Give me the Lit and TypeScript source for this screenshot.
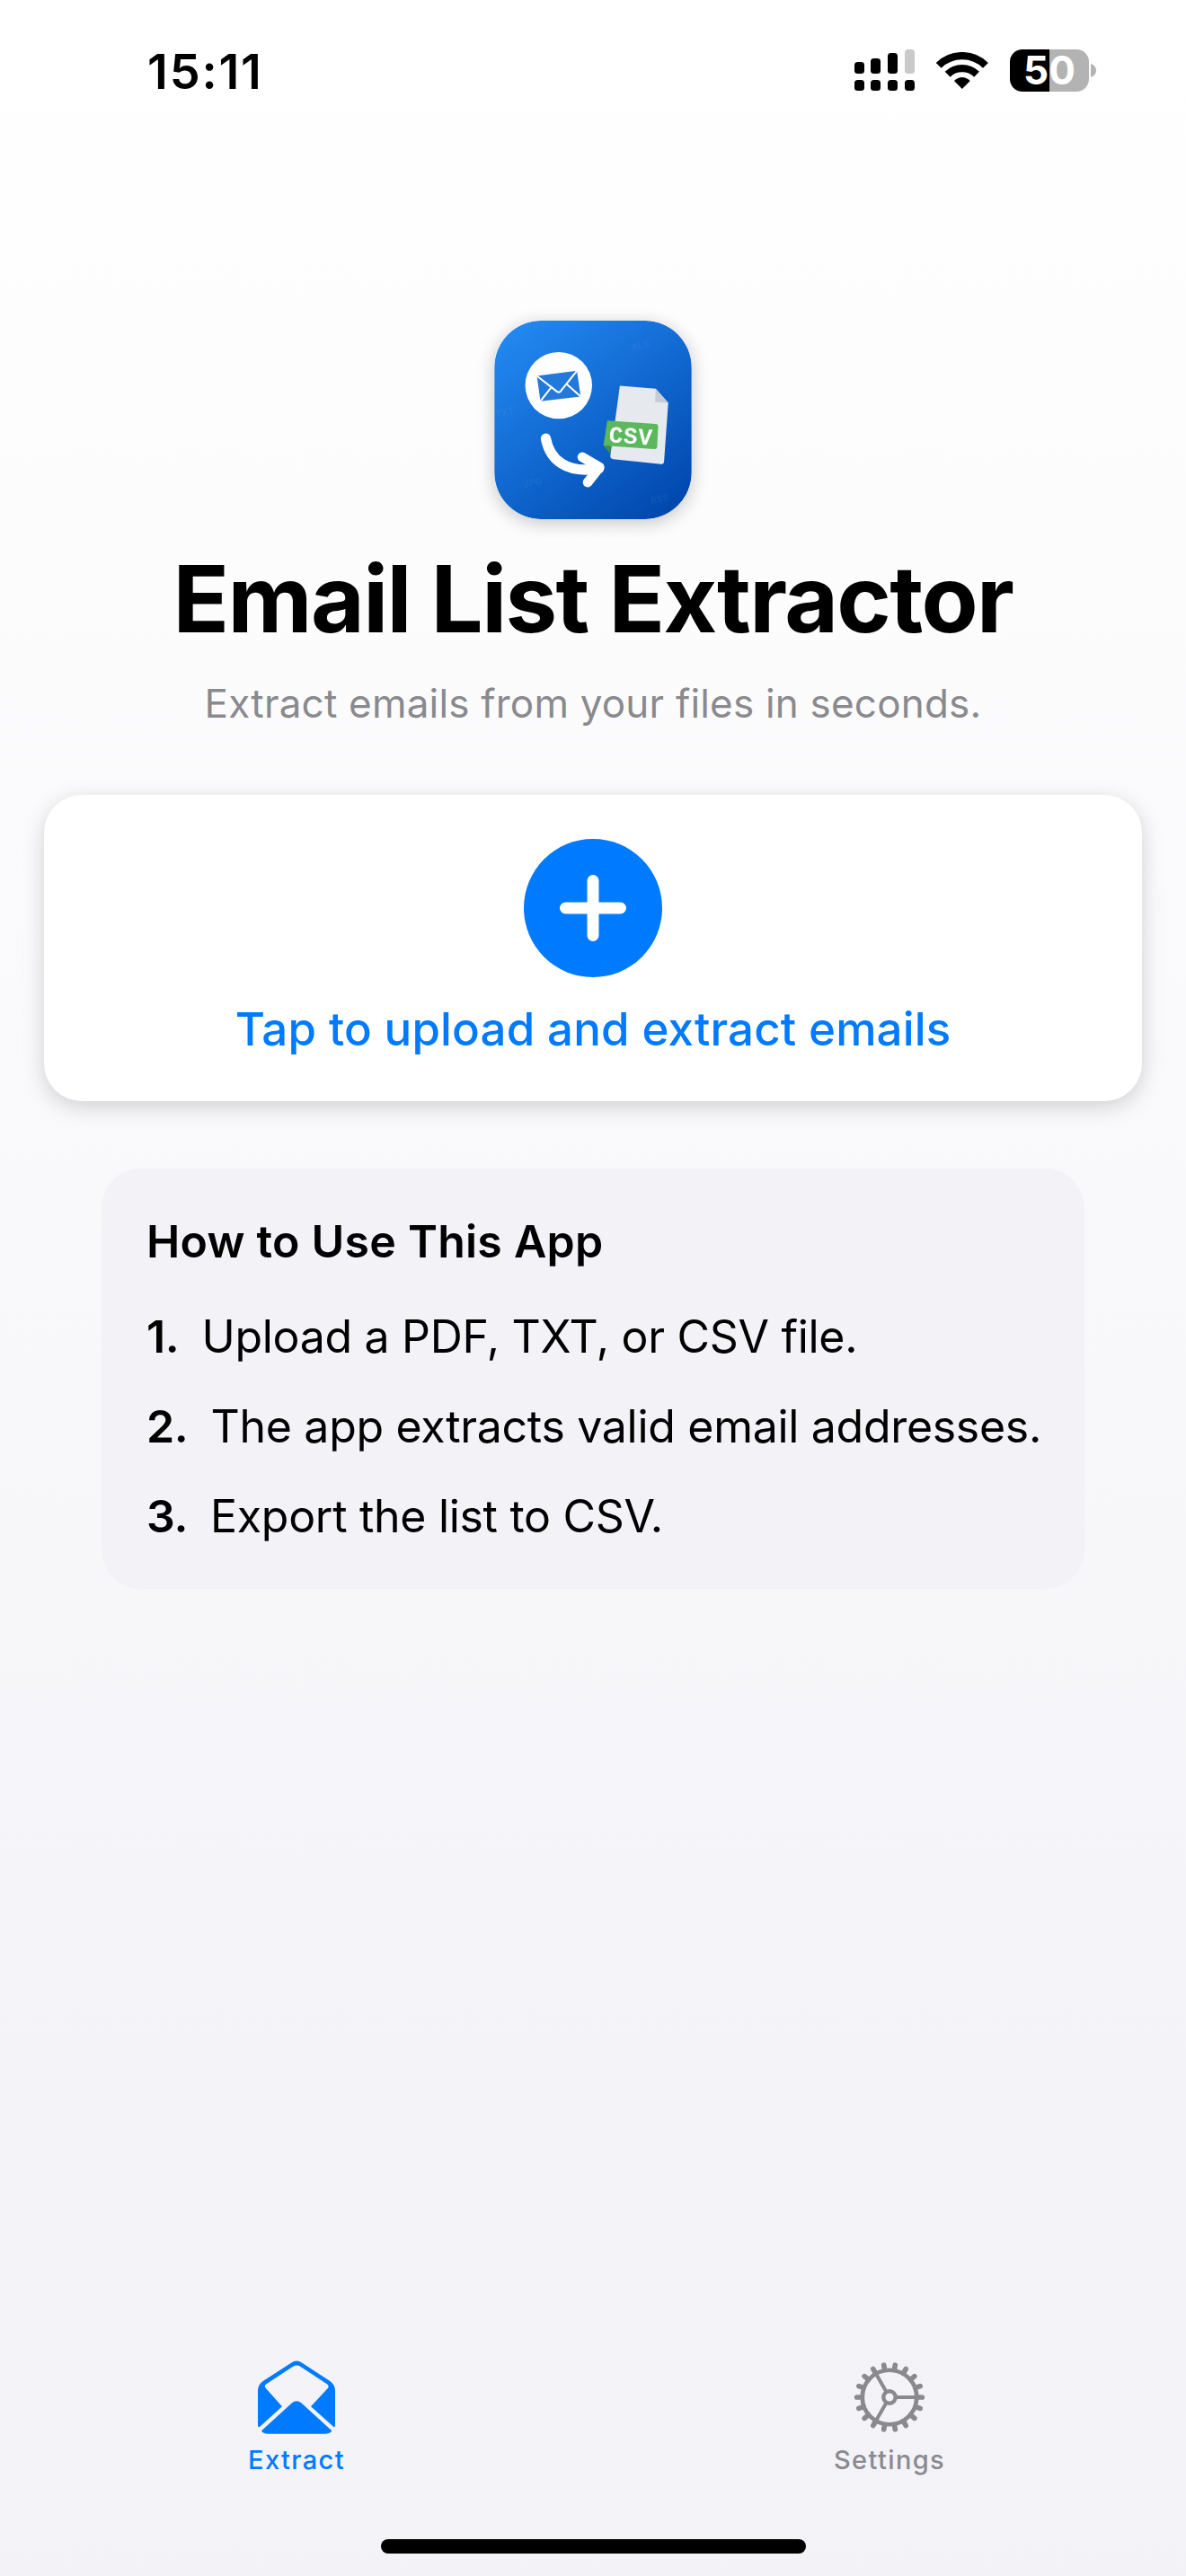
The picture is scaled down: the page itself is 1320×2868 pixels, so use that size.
import { html, svg, LitElement, css } from 'lit';
import { customElement } from 'lit/decorators.js';

const steps = [
  { num: '1.', text: 'Upload a PDF, TXT, or CSV file.' },
  { num: '2.', text: 'The app extracts valid email addresses.' },
  { num: '3.', text: 'Export the list to CSV.' },
];

// gear teeth sit every 20 degrees, spokes every 120
const gearTeeth = Array.from({ length: 18 }, (_, i) => i * 20);
const gearSpokes = [0, 120, 240];

@customElement('app-root')
export default class AppRoot extends LitElement {
  static styles = [
    css`
      :host {
        display: block;
        width: 1320px;
        font-family: Inter, "Liberation Sans", sans-serif;
      }
      .screen {
        width: 1320px;
        height: 2868px;
        display: flex;
        flex-direction: column;
        background: linear-gradient(180deg, #ffffff 0%, #f2f2f7 100%);
        color: #000;
      }
      .status {
        display: flex;
        justify-content: space-between;
        align-items: center;
        height: 60px;
        padding: 48px 100px 12px 164px;
      }
      .time {
        font-size: 54px;
        font-weight: 600;
        line-height: 60px;
        padding-top: 3px;
        letter-spacing: 1.8px;
      }
      .status-right {
        display: flex;
        align-items: center;
        gap: 24px;
      }
      .status-right svg {
        display: block;
      }
      .battery-wrap {
        display: flex;
        align-items: center;
        gap: 2px;
      }
      .battery {
        width: 88px;
        height: 47px;
        border-radius: 14px;
        background: linear-gradient(90deg, #000 0 44px, #b3b3b3 44px 88px);
        color: #fff;
        font-size: 44px;
        font-weight: 700;
        line-height: 47px;
        text-align: center;
      }
      .main {
        flex: 1;
        display: flex;
        flex-direction: column;
        align-items: center;
      }
      .logo {
        display: block;
        width: 220px;
        height: 221px;
        margin-top: 237px;
        border-radius: 52px;
        box-shadow: 0 4px 20px rgba(0, 0, 0, 0.22);
      }
      h1 {
        margin: 29px 0 0;
        font-size: 103px;
        font-weight: 700;
        line-height: 120px;
        letter-spacing: -1.6px;
        white-space: nowrap;
      }
      .subtitle {
        margin-top: 26px;
        font-size: 44px;
        line-height: 60px;
        letter-spacing: 0.2px;
        color: #8a8a8e;
        white-space: nowrap;
      }
      .upload {
        width: 1222px;
        margin-top: 72px;
        padding: 49px 0 50px;
        display: flex;
        flex-direction: column;
        align-items: center;
        background: #fff;
        border-radius: 42px;
        box-shadow: 0 6px 24px rgba(0, 0, 0, 0.17);
      }
      .plus {
        display: flex;
        align-items: center;
        justify-content: center;
        width: 154px;
        height: 154px;
        border-radius: 50%;
        background: #007aff;
      }
      .upload-label {
        margin-top: 28px;
        font-size: 51px;
        font-weight: 500;
        line-height: 60px;
        letter-spacing: 0.15px;
        color: #007aff;
        white-space: nowrap;
      }
      .help {
        box-sizing: border-box;
        width: 1094px;
        margin-top: 75px;
        padding: 51px 50px;
        background: #f2f2f7;
        border-radius: 44px;
      }
      h2 {
        margin: 0 0 46px;
        font-size: 50px;
        font-weight: 600;
        line-height: 60px;
        letter-spacing: 0.25px;
      }
      .step {
        display: flex;
        gap: 25px;
        margin-top: 40px;
        font-size: 50px;
        line-height: 60px;
        letter-spacing: -0.3px;
        white-space: nowrap;
      }
      .step:first-of-type {
        margin-top: 0;
      }
      .step b {
        font-weight: 600;
      }
      .tabs {
        display: grid;
        grid-template-columns: 1fr 1fr;
      }
      .tab {
        display: flex;
        flex-direction: column;
        align-items: center;
        color: #8a8a8e;
      }
      .tab.active {
        color: #007aff;
      }
      .tab svg {
        display: block;
        height: 82px;
      }
      .tab span {
        margin-top: 12px;
        font-size: 29px;
        font-weight: 500;
        line-height: 34px;
        letter-spacing: 1.4px;
      }
      .home-bar {
        align-self: center;
        width: 473px;
        height: 16px;
        margin: 71px 0 25px;
        border-radius: 8px;
        background: #000;
      }
    `,
  ];

  renderSignal() {
    const bars = [
      { x: 0, y: 14, h: 13 },
      { x: 18, y: 10, h: 17 },
      { x: 37, y: 4, h: 23 },
      { x: 56, y: 0, h: 27, fill: '#c9c9c9' },
    ];
    return html`<svg width="67" height="46" viewBox="0 0 67 46">
      ${bars.map(
        (b) => svg`
          <rect x=${b.x} y=${b.y} width="11" height=${b.h} rx="3.5" fill=${b.fill ?? '#000'}></rect>
          <rect x=${b.x} y="34" width="11" height="12" rx="3.5" fill="#000"></rect>
        `,
      )}
    </svg>`;
  }

  renderWifi() {
    return html`<svg width="58" height="41" viewBox="305 38 175 124">
      <path d="M313 83A112 112 0 0 1 471 83" fill="none" stroke="#000" stroke-width="25"></path>
      <path d="M343 113A70 70 0 0 1 441 113" fill="none" stroke="#000" stroke-width="25"></path>
      <path d="M392 162L365 135Q392 110 419 135Z" fill="#000"></path>
    </svg>`;
  }

  // coordinates follow a 3x crop of the icon, hence the odd viewBox
  renderLogo() {
    return html`<svg class="logo" viewBox="90 50 660 665">
      <defs>
        <linearGradient id="logoBg" x1="0.1" y1="0" x2="0.85" y2="1">
          <stop offset="0" stop-color="#2389f2"></stop>
          <stop offset="0.55" stop-color="#0f66cd"></stop>
          <stop offset="1" stop-color="#0047ad"></stop>
        </linearGradient>
      </defs>
      <rect x="90" y="50" width="660" height="665" rx="156" fill="url(#logoBg)"></rect>
      <g fill="#fff" opacity="0.05" font-family="Inter, sans-serif" font-weight="700" font-size="32">
        <text x="550" y="150" transform="rotate(-12 550 150)">XLS</text>
        <text x="95" y="375" transform="rotate(-12 95 375)">TXT</text>
        <text x="190" y="610" transform="rotate(-12 190 610)">JPG</text>
        <text x="615" y="665" transform="rotate(-12 615 665)">RSS</text>
      </g>
      <circle cx="305" cy="267" r="112" fill="#fff"></circle>
      <path d="M232 235L366 218L379 304L244 320Z" fill="#2279d9"></path>
      <path d="M232 235L300 288Q306 292 312 286L366 218M244 320L283 270M379 304L331 262" fill="none" stroke="#fff" stroke-width="6"></path>
      <path d="M262 445C275 515 330 565 440 545" fill="none" stroke="#fff" stroke-width="34" stroke-linecap="round"></path>
      <path d="M384 507L442 541L402 592" fill="none" stroke="#fff" stroke-width="32" stroke-linecap="round" stroke-linejoin="round"></path>
      <path d="M510 268L630 278L672 325L658 522Q657 532 648 531L488 514Q477 512 478 502Z" fill="#e6e9ee"></path>
      <path d="M630 278L672 325L628 322Z" fill="#c4ccd6"></path>
      <path d="M455 468L478 497L480 469Z" fill="#3f8f48"></path>
      <path d="M468 385L630 396Q639 397 638 406L635 472Q634 481 625 480L455 468Z" fill="#5cb85c"></path>
      <text x="547" y="462" text-anchor="middle" transform="rotate(4 547 437)" fill="#fff" font-family="'Liberation Mono', monospace" font-weight="700" font-size="78" letter-spacing="2">CSV</text>
    </svg>`;
  }

  renderEnvelope() {
    return html`<svg width="86" height="82" viewBox="140 85 255 243" fill="#007aff">
      <path d="M250 93Q268 80 286 93L378 153Q395 165 395 185L395 300Q395 305 391 305L315 237L372 175Q375 168 368 163L280 105Q268 97 256 105L168 163Q160 168 165 175L220 237L145 305Q140 305 140 300L140 185Q140 165 157 153Z"></path>
      <path d="M152 317L252 226Q268 212 284 226L384 317Q380 327 360 327L175 327Q155 327 152 317Z"></path>
    </svg>`;
  }

  renderGear() {
    return html`<svg width="82" height="82" viewBox="-122 -122 244 244" fill="none" stroke="#8a8a8e">
      <circle r="90" stroke-width="14"></circle>
      ${gearTeeth.map(
        (a) => svg`<path d="M0 -92L0 -108" transform="rotate(${a + 90})" stroke-width="17" stroke-linecap="round"></path>`,
      )}
      ${gearSpokes.map(
        (a) => svg`<path d="M20 0L90 0" transform="rotate(${a})" stroke-width="12"></path>`,
      )}
      <circle r="20" stroke-width="13"></circle>
    </svg>`;
  }

  render() {
    return html`
      <div class="screen">
        <div class="status">
          <div class="time">15:11</div>
          <div class="status-right">
            ${this.renderSignal()} ${this.renderWifi()}
            <div class="battery-wrap">
              <div class="battery">50</div>
              <svg width="6" height="15" viewBox="0 0 6 15"><path d="M0 0Q6 2 6 7.5Q6 13 0 15Z" fill="#b3b3b3"></path></svg>
            </div>
          </div>
        </div>
        <div class="main">
          ${this.renderLogo()}
          <h1>Email List Extractor</h1>
          <div class="subtitle">Extract emails from your files in seconds.</div>
          <div class="upload">
            <div class="plus">
              <svg width="74" height="74" viewBox="0 0 74 74">
                <path d="M37 6.500V67.500M6.500 37H67.500" stroke="#fff" stroke-width="13" stroke-linecap="round"></path>
              </svg>
            </div>
            <div class="upload-label">Tap to upload and extract emails</div>
          </div>
          <div class="help">
            <h2>How to Use This App</h2>
            ${steps.map((s) => html`<div class="step"><b>${s.num}</b><span>${s.text}</span></div>`)}
          </div>
        </div>
        <div class="tabs">
          <div class="tab active">${this.renderEnvelope()}<span>Extract</span></div>
          <div class="tab">${this.renderGear()}<span>Settings</span></div>
        </div>
        <div class="home-bar"></div>
      </div>
    `;
  }
}
